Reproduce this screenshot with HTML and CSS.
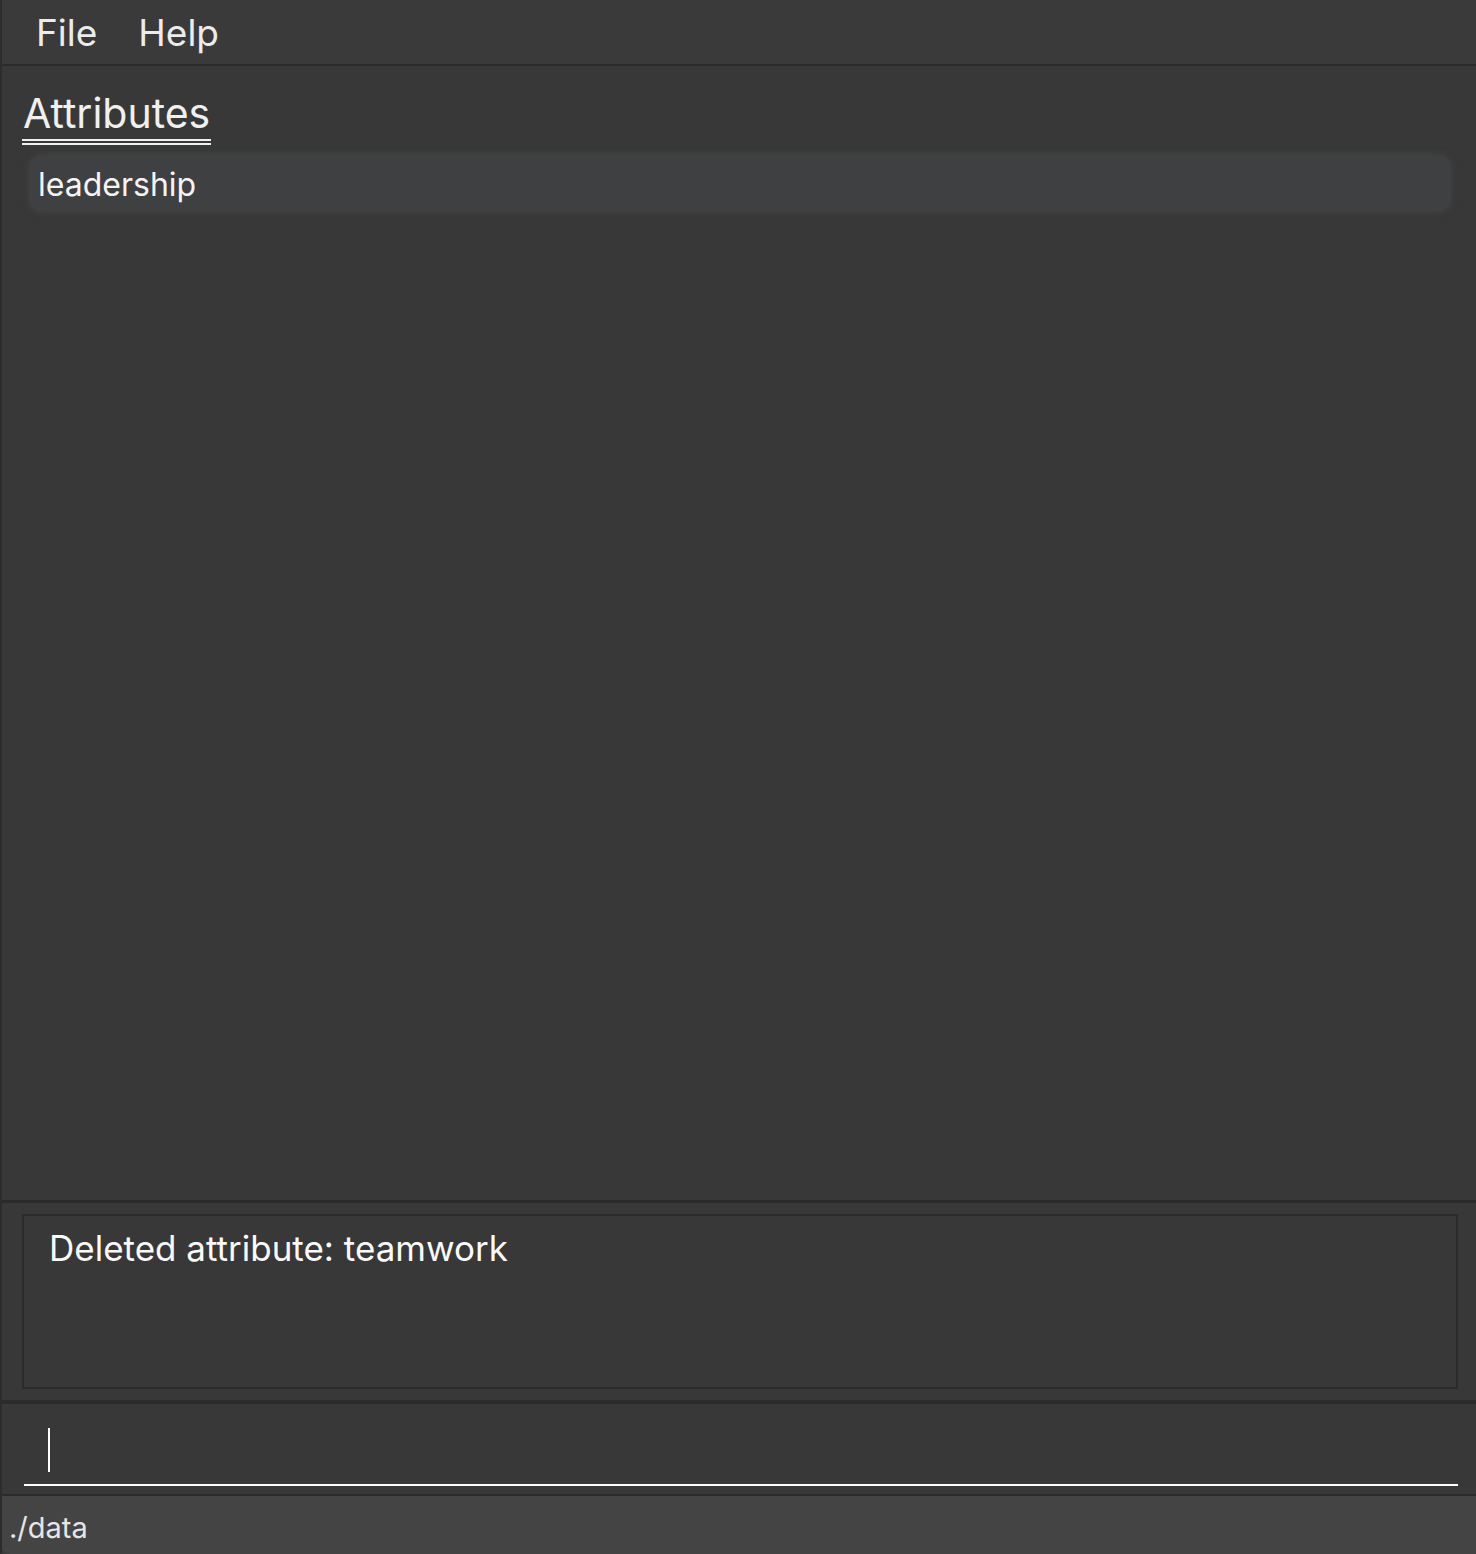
FILE: index.html
```html
<!DOCTYPE html>
<html>
<head>
<meta charset="utf-8">
<link rel="stylesheet" href="styles.css">
</head>
<body>
<div class="app">
  <div class="menubar">
    <span class="menu-item menu-file">File</span>
    <span class="menu-item">Help</span>
  </div>
  <div class="main">
    <div class="title-row">
      <div class="title">Attributes</div>
    </div>
    <div class="list">
      <div class="card">leadership</div>
    </div>
  </div>
  <div class="result-wrap">
    <div class="result">Deleted attribute: teamwork</div>
  </div>
  <div class="command-wrap">
    <div class="command">
      <span class="caret"></span>
    </div>
  </div>
  <div class="status">./data</div>
</div>
</body>
</html>
```
FILE: styles.css
```css
html, body {
  margin: 0;
  padding: 0;
  background: #383838;
}
.app {
  width: 1476px;
  height: 1554px;
  display: flex;
  flex-direction: column;
  box-sizing: border-box;
  border-left: 2px solid #2c2c2c;
  font-family: Inter, "Open Sans", sans-serif;
  color: #f2f2f2;
  overflow: hidden;
}
.menubar {
  height: 66px;
  box-sizing: border-box;
  background: #3a3a3a;
  border-bottom: 2px solid #2b2b2b;
  display: flex;
  align-items: center;
  padding-left: 34px;
  gap: 41px;
  font-size: 37px;
  color: #ececec;
}
.main {
  flex: 1;
  background: #383838;
  padding: 23px 0 0 20px;
  border-bottom: 3px solid #2b2b2b;
}
.title-row {
  display: flex;
}
.title {
  font-size: 41px;
  line-height: 48px;
  color: #f0f0f0;
  padding: 0 1px 2px 1px;
  border-bottom: 6px double #f0f0f0;
}
.list {
  padding: 0 28px 0 10px;
  margin-top: 12px;
}
.card {
  height: 52px;
  box-sizing: border-box;
  background: #3e4042;
  border-radius: 10px;
  box-shadow: 0 0 6px 3px rgba(72, 74, 76, 0.7);
  padding: 3px 0 0 6px;
  display: flex;
  align-items: center;
  font-size: 32px;
  color: #f4f4f4;
}
.result-wrap {
  padding: 11px 18px 11px 20px;
  background: #383838;
  border-bottom: 4px solid #2b2b2b;
}
.result {
  height: 175px;
  box-sizing: border-box;
  border: 2px solid #2b2b2b;
  padding: 10px 0 0 25px;
  font-size: 35px;
  line-height: 44px;
  color: #fafafa;
}
.command-wrap {
  height: 92px;
  box-sizing: border-box;
  padding: 0 18px 0 22px;
  background: #383838;
  border-bottom: 2px solid #2b2b2b;
}
.command {
  height: 82px;
  box-sizing: border-box;
  border-bottom: 2px solid #ffffff;
  padding: 24px 0 0 24px;
}
.caret {
  display: block;
  width: 2px;
  height: 44px;
  background: #ffffff;
}
.status {
  height: 58px;
  box-sizing: border-box;
  background: #444444;
  display: flex;
  align-items: center;
  font-size: 29px;
  color: #e6e6e6;
  border-bottom-left-radius: 10px;
  margin-left: -2px;
  padding: 4px 0 0 9px;
}
```
